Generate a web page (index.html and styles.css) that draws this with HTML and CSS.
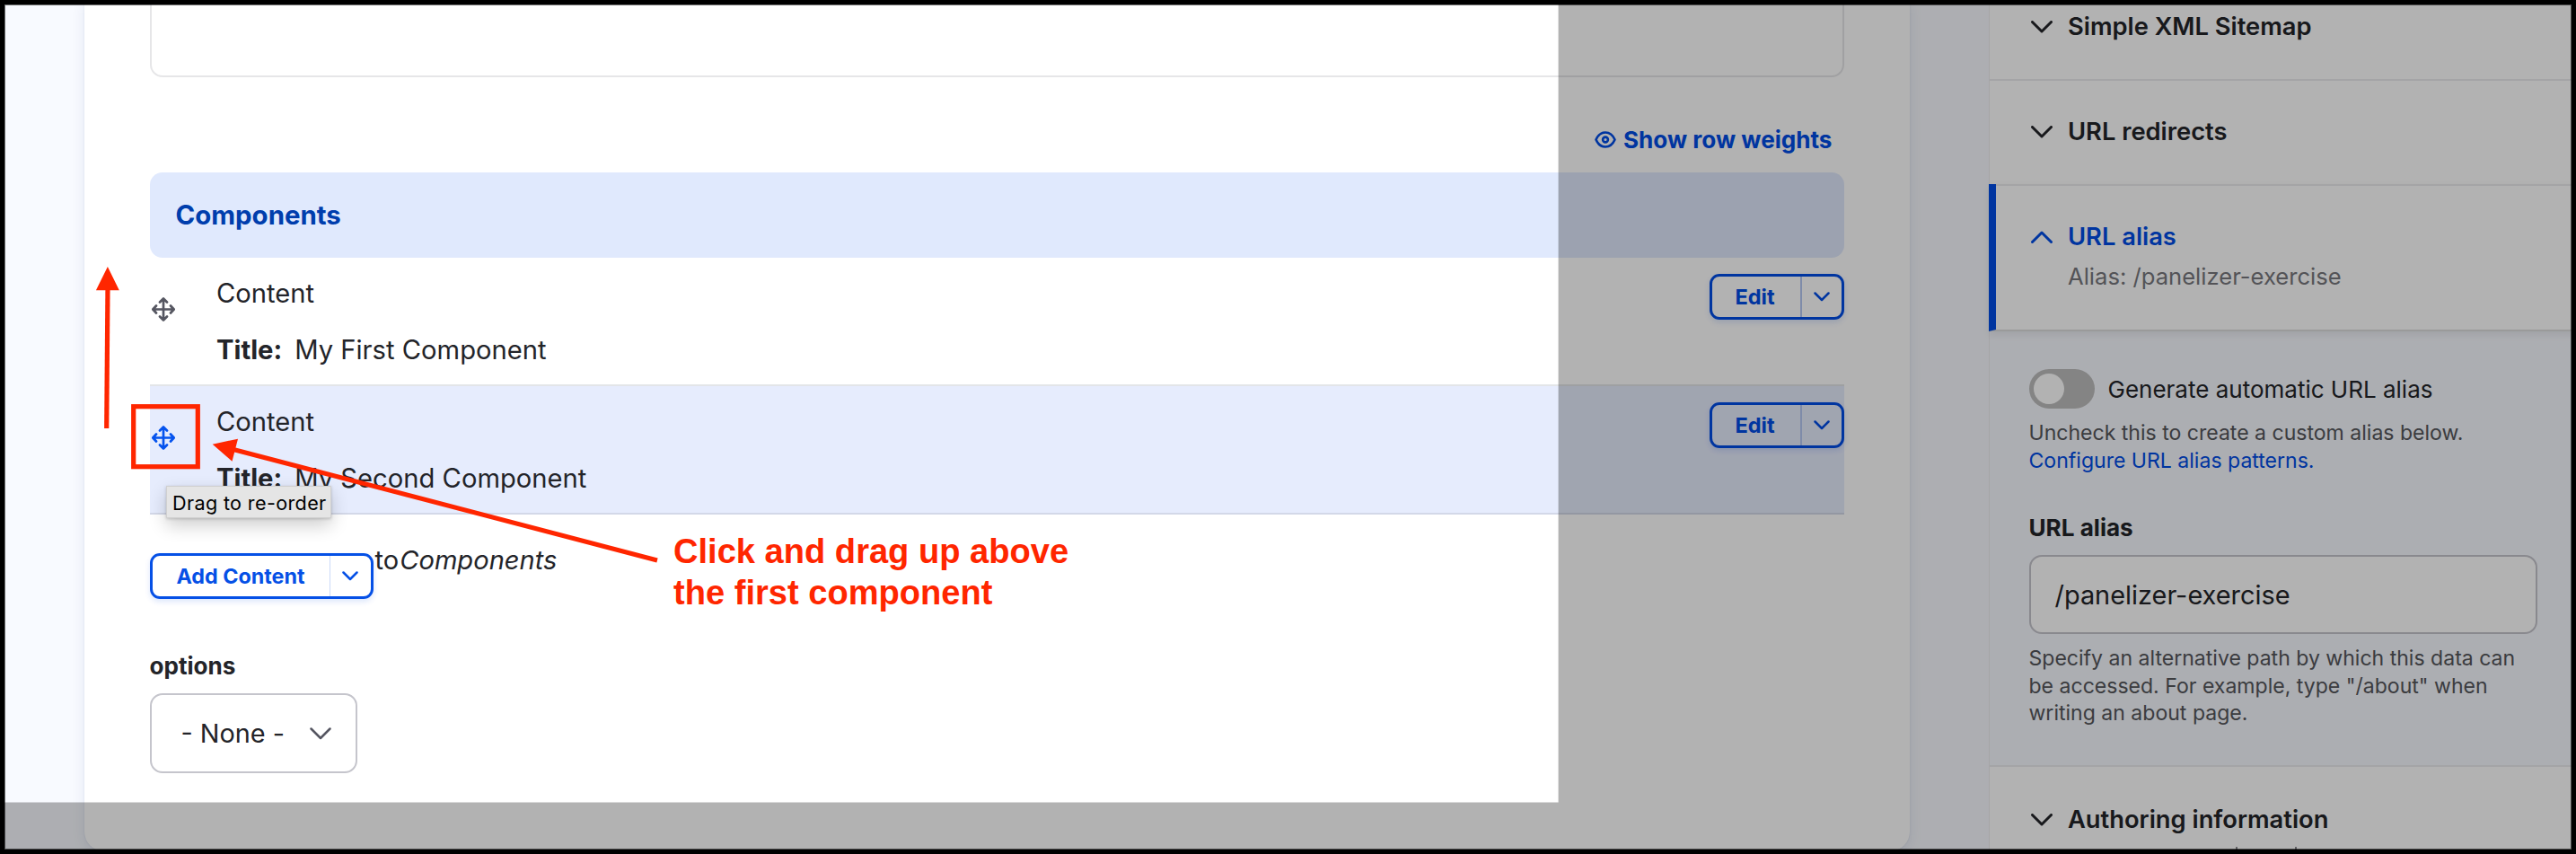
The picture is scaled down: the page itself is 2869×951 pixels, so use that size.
FILE: index.html
```html
<!DOCTYPE html>
<html lang="en">
<head>
<meta charset="utf-8">
<title>Edit page</title>
<link rel="stylesheet" href="styles.css">
</head>
<body>
<div class="page">
  <main class="panel">
    <div class="textarea"></div>
    <div class="weights">
      <svg class="eye" viewBox="0 0 24 19"><path d="M1.500 9.500C3.800 4.300 7.500 1.500 12 1.500S20.200 4.300 22.500 9.500C20.200 14.700 16.500 17.500 12 17.500S3.800 14.700 1.500 9.500z"/><circle cx="12" cy="9.500" r="2.900"/></svg>
      <span>Show row weights</span>
    </div>
    <div class="thead">Components</div>
    <div class="row">
      <svg class="move" viewBox="0 0 26 27"><path d="M13 1.500V25.500M1.500 13.500H24.500M9 5.500L13 1.500L17 5.500M9 21.500L13 25.500L17 21.500M5 9.500L1.300 13.500L5 17.500M21 9.500L24.700 13.500L21 17.500"/></svg>
      <div class="cell"><p>Content</p><p class="title"><b>Title:</b><span>My First Component</span></p></div>
      <div class="drop"><span class="act">Edit</span><span class="tog"><svg viewBox="0 0 18 11"><path d="M1.500 1.500L9 9L16.500 1.500"/></svg></span></div>
    </div>
    <div class="row active">
      <svg class="move" viewBox="0 0 26 27"><path d="M13 1.500V25.500M1.500 13.500H24.500M9 5.500L13 1.500L17 5.500M9 21.500L13 25.500L17 21.500M5 9.500L1.300 13.500L5 17.500M21 9.500L24.700 13.500L21 17.500"/></svg>
      <div class="cell"><p>Content</p><p class="title"><b>Title:</b><span>My Second Component</span></p></div>
      <div class="drop"><span class="act">Edit</span><span class="tog"><svg viewBox="0 0 18 11"><path d="M1.500 1.500L9 9L16.500 1.500"/></svg></span></div>
    </div>
    <div class="add">
      <div class="drop wide"><span class="act">Add Content</span><span class="tog"><svg viewBox="0 0 18 11"><path d="M1.500 1.500L9 9L16.500 1.500"/></svg></span></div>
      <p class="to">to<em>Components</em></p>
    </div>
    <div class="label options">options</div>
    <div class="select"><span>- None -</span><svg viewBox="0 0 24 14"><path d="M1.500 1.500L12 12L22.500 1.500"/></svg></div>
  </main>
  <aside class="side">
    <section class="sum first"><svg viewBox="0 0 24 14"><path d="M1.500 1.500L12 12L22.500 1.500"/></svg><span>Simple XML Sitemap</span></section>
    <section class="sum"><svg viewBox="0 0 24 14"><path d="M1.500 1.500L12 12L22.500 1.500"/></svg><span>URL redirects</span></section>
    <section class="sum open"><svg viewBox="0 0 24 14"><path d="M1.500 12.500L12 2L22.500 12.500"/></svg><div><span>URL alias</span><p class="sub">Alias: /panelizer-exercise</p></div></section>
    <section class="body">
      <div class="switch"><i></i><span>Generate automatic URL alias</span></div>
      <p class="desc">Uncheck this to create a custom alias below.<br><a>Configure URL alias patterns.</a></p>
      <div class="label">URL alias</div>
      <div class="input">/panelizer-exercise</div>
      <p class="desc low">Specify an alternative path by which this data can<br>be accessed. For example, type "/about" when<br>writing an about page.</p>
    </section>
    <section class="sum last"><svg viewBox="0 0 24 14"><path d="M1.500 1.500L12 12L22.500 1.500"/></svg><span>Authoring information</span></section>
    <div class="cut"><i></i><i></i></div>
  </aside>
</div>
<div class="tip">Drag to re-order</div>
<div class="dim"></div>
<svg class="marks" viewBox="0 0 2869 951">
  <g stroke="#ff2600" stroke-width="5.200" fill="none">
    <path d="M118.700 477L120 318"/>
    <rect x="148.700" y="452.700" width="71.600" height="67"/>
    <path d="M258 500L732 624"/>
  </g>
  <path fill="#ff2600" d="M119.900 297L132.800 323.200H106.900zM236.700 494.700L265 488.700L258.500 513.700z"/>
</svg>
<div class="note">Click and drag up above<br>the first component</div>
<div class="frame"></div>
</body>
</html>
```
FILE: styles.css
```css
body {
  margin: 0;
  width: 2869px;
  height: 951px;
  overflow: hidden;
  position: relative;
  background: #f8faff;
  font-family: Inter, sans-serif;
  font-size: 29.1px;
  line-height: 40px;
  color: #232429;
  white-space: nowrap;
}
p { margin: 0; }
svg {
  display: block;
  flex: none;
  fill: none;
  stroke: currentColor;
  stroke-width: 2.7;
  stroke-linecap: round;
  stroke-linejoin: round;
}
.page { display: flex; gap: 88px; height: 951px; padding-left: 94px; }

/* Main panel */
.panel {
  flex: none;
  width: 2033px;
  height: 948px;
  padding: 0 73.5px 0 72.5px;
  box-sizing: border-box;
  background: #fff;
  border-radius: 0 0 22px 22px;
  box-shadow: 0 0 2px rgba(20, 45, 110, .12), 0 4px 16px rgba(20, 45, 110, .09);
}
.textarea {
  height: 86px;
  box-sizing: border-box;
  border: 2px solid #e6e6e8;
  border-top: 0;
  border-radius: 0 0 14px 14px;
}
.weights {
  display: flex;
  align-items: center;
  justify-content: flex-end;
  gap: 8px;
  height: 52px;
  margin: 43.500px 13px 10px 0;
  font-size: 26.1px;
  font-weight: 700;
  color: #004ce6;
}
.eye { width: 24px; height: 19px; stroke-width: 2.6; }
.thead {
  height: 95px;
  line-height: 95px;
  padding-left: 29px;
  border-radius: 14px;
  background: #e0e9fd;
  color: #003ead;
  font-size: 29.4px;
  font-weight: 700;
}
.row {
  display: flex;
  height: 143px;
  box-sizing: border-box;
  border-bottom: 2px solid #e3e5e8;
}
.row.active { background: #e6ecfd; border-color: #d3d8e8; }
.move { width: 26px; height: 27px; margin: 44.500px 0 0 2.500px; color: #555661; }
.active .move { color: #0553ee; }
.cell { flex: 1; padding: 20px 0 0 46px; font-size: 29.2px; }
.title { display: flex; gap: 14px; margin-top: 23px; }
.drop {
  display: flex;
  flex: none;
  width: 150px;
  height: 51px;
  margin-top: 18px;
  box-sizing: border-box;
  border: 3px solid #0550e6;
  border-radius: 11px;
  box-shadow: 0 3px 6px rgba(5, 80, 230, .14);
  font-size: 23.5px;
  font-weight: 700;
  line-height: 46px;
  color: #0550e6;
}
.row .drop, .row .drop .act { border-color: #004ce6; color: #004ce6; }
.act { width: 98px; padding-left: 26px; box-sizing: border-box; }
.tog { flex: 1; display: flex; align-items: center; justify-content: center; border-left: 1.500px solid #cbdaf8; }
.row .tog { border-left: 2px solid #b5c8f2; }
.tog svg { width: 18px; height: 11px; stroke-width: 2.5; }
.add { display: flex; height: 51px; margin-top: 43.500px; }
.drop.wide { width: 249px; margin: 0; }
.wide .act { width: 197px; padding-left: 27px; font-size: 23.3px; }
.to { margin: -12px 0 0 2px; }
.to em { padding-left: 1px; }
.label { height: 40px; font-size: 26.1px; font-weight: 700; }
.options { margin-top: 55px; }
.select {
  display: flex;
  align-items: center;
  justify-content: space-between;
  width: 231px;
  height: 89px;
  margin-top: 10px;
  padding: 0 27px 0 33px;
  box-sizing: border-box;
  border: 2px solid #c5c5cc;
  border-radius: 14px;
  font-size: 28.8px;
}
.select svg { width: 24px; height: 14px; color: #555661; stroke-width: 2.5; }

/* Sidebar */
.side {
  flex: none;
  width: 654px;
  box-sizing: border-box;
  border-left: 1px solid #ededf0;
  background: #fff;
}
.sum {
  display: flex;
  gap: 17px;
  height: 117px;
  padding: 37px 0 0 46px;
  box-sizing: border-box;
  border-bottom: 2px solid #ebebee;
  font-size: 27.3px;
  font-weight: 620;
}
.sum svg { width: 24px; height: 14px; margin-top: 13px; stroke-width: 3; }
.sum.first { height: 90px; padding-top: 10px; }
.sum.open {
  position: relative;
  height: 164px;
  margin: -2px 0 0 -1px;
  padding: 39px 0 0 39px;
  border-left: 8px solid #004ce6;
  border-top: 0;
  border-bottom-color: #ddd;
  box-shadow: inset 0 2px #ebebee, 0 4px 8px rgba(0, 0, 0, .07);
  background: #fff;
  color: #004ce6;
}
.sub { margin-top: 4px; font-size: 25.6px; font-weight: 400; color: #77787d; }
.body {
  height: 485px;
  padding: 42px 43.500px 0 43.500px;
  box-sizing: border-box;
  border-bottom: 2px solid #ebebee;
  background: #f7f9ff;
}
.switch { display: flex; gap: 15px; height: 44px; line-height: 46px; font-size: 26px; }
.switch i { width: 73px; height: 44px; box-sizing: border-box; padding: 5px; border-radius: 22px; background: #bdbdbd; }
.switch i::before { content: ""; display: block; width: 34px; height: 34px; border-radius: 50%; background: #fff; }
.desc { margin-top: 12px; font-size: 23.05px; line-height: 30.7px; color: #55565b; }
.desc a { color: #004ce6; }
.body .label { margin-top: 40px; }
.input {
  height: 88px;
  margin-top: 10px;
  padding-left: 27px;
  box-sizing: border-box;
  border: 2px solid #c5c5cc;
  border-radius: 14px;
  background: #fff;
  font-size: 28.9px;
  line-height: 85px;
}
.low { margin-top: 11.5px; }
.sum.last { height: 89px; border: 0; padding-top: 38.500px; }
.cut { display: flex; gap: 64px; padding-left: 274px; }
.cut i { width: 2px; height: 5px; background: #8e8e92; }

/* Layers over the page */
.tip {
  position: absolute;
  left: 185px;
  top: 541px;
  width: 176px;
  height: 34px;
  padding-left: 6px;
  border: .5px solid #d0d0d0;
  background: #e5e5e5;
  box-shadow: 0 8px 20px rgba(0, 0, 0, .2), 0 1px 3px rgba(0, 0, 0, .18);
  font-size: 21.6px;
  letter-spacing: .35px;
  line-height: 37px;
  color: #000;
}
.dim {
  position: absolute;
  inset: 0;
  background: rgba(0, 0, 0, .3);
  clip-path: polygon(1735.6px 0, 100% 0, 100% 100%, 0 100%, 0 893.5px, 1735.6px 893.5px);
}
.marks {
  position: absolute;
  left: 0;
  top: 0;
  width: 2869px;
  height: 951px;
  stroke: none;
  stroke-linecap: butt;
  stroke-linejoin: miter;
}
.note {
  position: absolute;
  left: 750px;
  top: 591px;
  font: bold 38.1px/46.3px "Liberation Sans", Arial, sans-serif;
  color: #ff2600;
}
.frame {
  position: absolute;
  inset: 0;
  border: 5px solid #000;
  box-shadow: inset 0 0 0 1px rgba(0, 0, 0, .55);
}
```
